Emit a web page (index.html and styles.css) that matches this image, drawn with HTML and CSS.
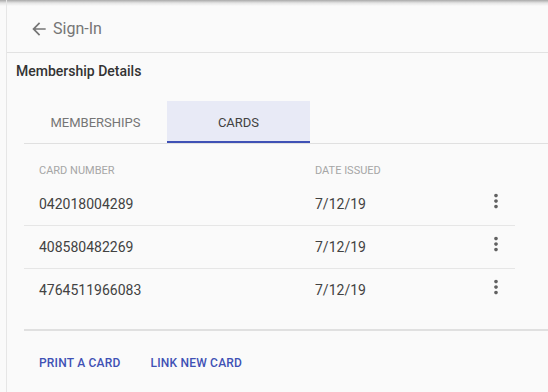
FILE: index.html
```html
<!DOCTYPE html>
<html>
<head>
<meta charset="utf-8">
<link rel="stylesheet" href="styles.css">
</head>
<body>
<div class="page">
  <header class="topbar">
    <svg class="back" viewBox="0 0 24 24" width="20" height="20"><path d="M20 11H7.83l5.59-5.59L12 4l-8 8 8 8 1.41-1.41L7.83 13H20v-2z"/></svg>
    <span class="back-label">Sign-In</span>
  </header>
  <h1 class="title">Membership Details</h1>
  <nav class="tabs">
    <div class="tab">MEMBERSHIPS</div>
    <div class="tab active">CARDS</div>
  </nav>
  <div class="table">
    <div class="row head">
      <div>CARD NUMBER</div>
      <div>DATE ISSUED</div>
      <div></div>
    </div>
    <div class="row">
      <div>042018004289</div>
      <div>7/12/19</div>
      <div class="menu"><svg viewBox="0 0 24 24" width="22" height="22"><path d="M12 8c1.1 0 2-.9 2-2s-.9-2-2-2-2 .9-2 2 .9 2 2 2zm0 2c-1.1 0-2 .9-2 2s.9 2 2 2 2-.9 2-2-.9-2-2-2zm0 6c-1.1 0-2 .9-2 2s.9 2 2 2 2-.9 2-2-.9-2-2-2z"/></svg></div>
    </div>
    <div class="row">
      <div>408580482269</div>
      <div>7/12/19</div>
      <div class="menu"><svg viewBox="0 0 24 24" width="22" height="22"><path d="M12 8c1.1 0 2-.9 2-2s-.9-2-2-2-2 .9-2 2 .9 2 2 2zm0 2c-1.1 0-2 .9-2 2s.9 2 2 2 2-.9 2-2-.9-2-2-2zm0 6c-1.1 0-2 .9-2 2s.9 2 2 2 2-.9 2-2-.9-2-2-2z"/></svg></div>
    </div>
    <div class="row last">
      <div>4764511966083</div>
      <div>7/12/19</div>
      <div class="menu"><svg viewBox="0 0 24 24" width="22" height="22"><path d="M12 8c1.1 0 2-.9 2-2s-.9-2-2-2-2 .9-2 2 .9 2 2 2zm0 2c-1.1 0-2 .9-2 2s.9 2 2 2 2-.9 2-2-.9-2-2-2zm0 6c-1.1 0-2 .9-2 2s.9 2 2 2 2-.9 2-2-.9-2-2-2z"/></svg></div>
    </div>
  </div>
  <div class="actions">
    <span class="btn">PRINT A CARD</span>
    <span class="btn">LINK NEW CARD</span>
  </div>
</div>
</body>
</html>
```
FILE: styles.css
```css
html, body {
  margin: 0;
  padding: 0;
}
body {
  background: linear-gradient(#a9a9a9, #e4e4e4 3px, #fafafa 6px) no-repeat top / 100% 6px, #fafafa;
  font-family: Roboto, "Liberation Sans", sans-serif;
  height: 392px;
  overflow: hidden;
}
.page {
  margin-left: 6px;
  border-left: 1px solid #e6e6e6;
  height: 392px;
  box-sizing: border-box;
}
.topbar {
  height: 53px;
  box-sizing: border-box;
  padding: 6px 0 0 22px;
  display: flex;
  align-items: center;
  gap: 4px;
  border-bottom: 1px solid #e2e2e2;
}
.back {
  fill: #757575;
}
.back-label {
  font-size: 16px;
  color: #757575;
  line-height: 20px;
}
.title {
  margin: 8px 0 0 9px;
  font-size: 14px;
  font-weight: 500;
  line-height: 20px;
  color: #333;
}
.tabs {
  margin: 20px 0 0 17px;
  display: flex;
  border-bottom: 1px solid #e0e0e0;
}
.tab {
  width: 143px;
  height: 42px;
  display: flex;
  align-items: center;
  justify-content: center;
  font-size: 13px;
  color: #757575;
}
.tab.active {
  background: #e8eaf6;
  color: #424242;
  box-shadow: inset 0 -2px 0 #3f51b5;
}
.table {
  margin-left: 17px;
  width: 491px;
}
.row {
  display: grid;
  grid-template-columns: 276px 1fr 38px;
  padding-left: 15px;
  height: 42px;
  align-items: center;
  font-size: 14px;
  color: #424242;
  border-bottom: 1px solid #e6e6e6;
}
.row.head {
  height: 39px;
  box-sizing: border-box;
  padding-top: 20px;
  padding-bottom: 5px;
  line-height: 14px;
  font-size: 11px;
  color: #a6a6a6;
  border-bottom: none;
  align-items: start;
}
.row.last {
  border-bottom: none;
}
.menu {
  display: flex;
  justify-content: center;
  margin-top: -7px;
}
.menu svg {
  fill: #616161;
}
.actions {
  margin: 18px 0 0 17px;
  border-top: 2px solid #e0e0e0;
  padding: 14px 0 0 15px;
  display: flex;
  gap: 30px;
}
.btn {
  height: 36px;
  line-height: 36px;
  font-size: 12px;
  font-weight: 500;
  letter-spacing: 0.2px;
  color: #3f51b5;
}
```
